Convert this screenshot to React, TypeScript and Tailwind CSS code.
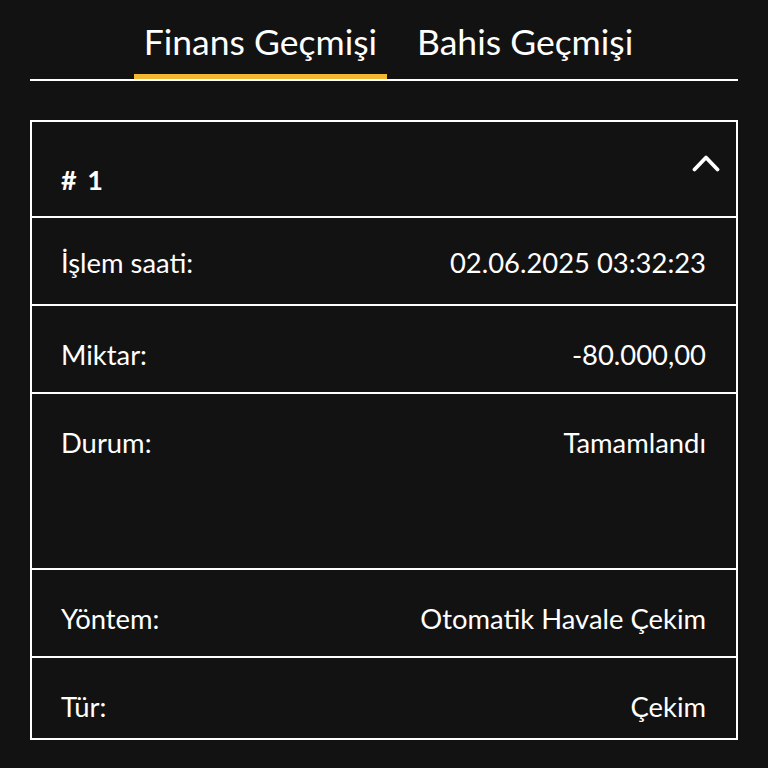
type Row = { label: string; value: string; h: string; pt: string; last?: boolean };

const rows: Row[] = [
  { label: 'İşlem saati:', value: '02.06.2025 03:32:23', h: 'h-[88px]', pt: 'pt-[29px]' },
  { label: 'Miktar:', value: '-80.000,00', h: 'h-[88px]', pt: 'pt-[33px]' },
  { label: 'Durum:', value: 'Tamamlandı', h: 'h-[176px]', pt: 'pt-[33px]' },
  { label: 'Yöntem:', value: 'Otomatik Havale Çekim', h: 'h-[88px]', pt: 'pt-[33px]' },
  { label: 'Tür:', value: 'Çekim', h: 'h-[80px]', pt: 'pt-[33px]', last: true },
];

export default function App() {
  return (
    <div
      className="min-h-[768px] bg-[#131212] px-[30px] pt-[18px] text-white"
      style={{ fontFamily: 'Lato, "Noto Sans", sans-serif' }}
    >
      <div className="flex justify-center gap-[20px] border-b-2 border-white pl-[9px]">
        <button className="relative px-[10px] pb-[13px] text-[35.5px] leading-[48px] text-white">
          Finans Geçmişi
          <span className="absolute bottom-0 left-0 h-[5px] w-full bg-[#f2b833]" />
        </button>
        <button className="px-[10px] pb-[13px] text-[35.5px] leading-[48px] text-white">
          Bahis Geçmişi
        </button>
      </div>

      <div className="mt-[39px] border-2 border-white">
        <div className="flex h-[96px] items-start justify-between border-b-2 border-white pl-[29px] pr-[16px]">
          <span className="mt-[42px] text-[27px] font-bold leading-[32px] [word-spacing:4px]">
            # 1
          </span>
          <svg
            className="mt-[32px]"
            width="28"
            height="18"
            viewBox="0 0 28 18"
            fill="none"
            stroke="currentColor"
            strokeWidth="3.8"
            strokeLinecap="round"
            strokeLinejoin="round"
          >
            <polyline points="2.5,15.5 14,3.5 25.5,15.5" />
          </svg>
        </div>
        {rows.map((row) => (
          <div
            key={row.label}
            className={`flex items-start justify-between pl-[29px] pr-[30px] text-[27.4px] leading-[32px] ${row.h} ${row.pt} ${
              row.last ? '' : 'border-b-2 border-white'
            }`}
          >
            <span>{row.label}</span>
            <span>{row.value}</span>
          </div>
        ))}
      </div>
    </div>
  );
}
